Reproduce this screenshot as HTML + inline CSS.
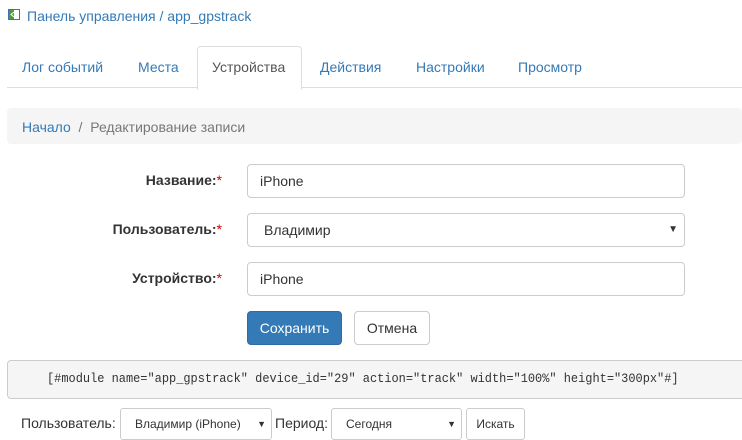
<!DOCTYPE html><html><head><meta charset="utf-8"><style>
body{margin:0;width:742px;height:431px;overflow:hidden;background:#fff;font-family:"Liberation Sans",sans-serif;font-size:14px;color:#333;position:relative}
.a{position:absolute;white-space:nowrap}
.lnk{color:#337ab7}
.tab{position:absolute;top:46px;height:41px;line-height:42px;color:#337ab7;font-size:14px}
.sel{position:absolute;left:247px;width:436px;height:32px;border:1px solid #ccc;border-radius:4px;box-sizing:content-box;font:14px "Liberation Sans",sans-serif;line-height:32px;color:#333}
.lbl{position:absolute;right:520px;font-weight:bold;text-align:right}
.lbl span{color:#c00;font-weight:normal}
</style></head><body>
<svg class="a" style="left:8px;top:9px" width="12" height="11"><rect x=".5" y=".5" width="11" height="10" fill="#fff" stroke="#4a6fa5"/><rect x="1" y="1" width="5" height="9" fill="#4a9a3a"/><path d="M6 3L3 5.5 6 8" stroke="#fff" fill="none"/></svg>
<div class="a lnk" style="left:27px;top:8px;font-size:14px">Панель управления / app_gpstrack</div>
<div class="a" style="left:7px;top:87px;width:735px;border-top:1px solid #ddd"></div>
<div class="a" style="left:197px;top:46px;width:103px;height:42px;border:1px solid #ddd;border-bottom:1px solid #fff;border-radius:4px 4px 0 0;background:#fff"></div>
<div class="tab" style="left:22px">Лог событий</div>
<div class="tab" style="left:138px">Места</div>
<div class="tab" style="left:212px;color:#555">Устройства</div>
<div class="tab" style="left:320px">Действия</div>
<div class="tab" style="left:416px">Настройки</div>
<div class="tab" style="left:518px">Просмотр</div>
<div class="a" style="left:7px;top:108px;width:735px;height:36px;background:#f5f5f5;border-radius:4px"></div>
<div class="a" style="left:22px;top:119px;color:#777"><span class="lnk">Начало</span>&nbsp;&nbsp;/&nbsp;&nbsp;Редактирование записи</div>
<div class="lbl" style="top:172px">Название:<span>*</span></div>
<div class="lbl" style="top:221px">Пользователь:<span>*</span></div>
<div class="lbl" style="top:270px">Устройство:<span>*</span></div>
<div class="sel" style="top:164px;text-indent:12px">iPhone</div>
<div class="sel" style="top:213px;text-indent:16px">Владимир<span style="position:absolute;right:6px;font-size:10px">▼</span></div>
<div class="sel" style="top:262px;text-indent:12px">iPhone</div>
<div class="a" style="left:247px;top:311px;width:93px;height:32px;background:#337ab7;border:1px solid #2e6da4;border-radius:4px;color:#fff;line-height:32px;text-align:center">Сохранить</div>
<div class="a" style="left:354px;top:311px;width:74px;height:32px;background:#fff;border:1px solid #ccc;border-radius:4px;line-height:32px;text-align:center">Отмена</div>
<div class="a" style="left:7px;top:360px;width:740px;height:37px;background:#f5f5f5;border:1px solid #ccc;border-radius:4px"></div>
<div class="a" style="left:47px;top:371px;font:13px 'Liberation Mono',monospace;color:#333;transform:scaleX(.92);transform-origin:left">[#module name="app_gpstrack" device_id="29" action="track" width="100%" height="300px"#]</div>
<div class="a" style="left:21px;top:415px;font-size:14px">Пользователь:</div>
<div class="a" style="left:120px;top:408px;width:150px;height:30px;border:1px solid #ccc;border-radius:3px;font-size:12px;line-height:30px;text-indent:14px">Владимир (iPhone)<span style="position:absolute;right:5px;font-size:9px">▼</span></div>
<div class="a" style="left:275px;top:415px">Период:</div>
<div class="a" style="left:331px;top:408px;width:129px;height:30px;border:1px solid #ccc;border-radius:3px;font-size:12px;line-height:30px;text-indent:14px">Сегодня<span style="position:absolute;right:5px;font-size:9px">▼</span></div>
<div class="a" style="left:466px;top:408px;width:57px;height:30px;border:1px solid #ccc;border-radius:3px;font-size:12px;line-height:30px;text-align:center">Искать</div>
</body></html>
